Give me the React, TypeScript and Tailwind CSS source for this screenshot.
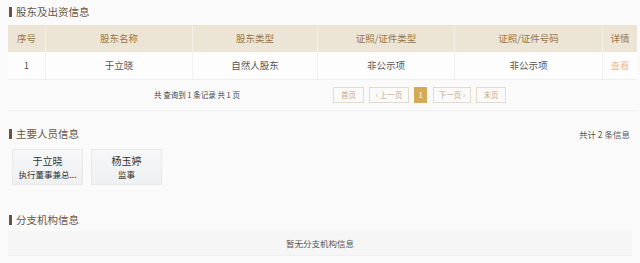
import React from "react";

const font = { fontFamily: '"Noto Sans CJK SC", "Noto Sans", sans-serif' };

function Title({ text }: { text: string }) {
  return (
    <div className="flex items-center gap-[4px] h-[14px] pl-[9px]">
      <div className="w-[3px] h-[10px] bg-[#6b5240]" />
      <span className="text-[10.5px] leading-none text-[#6b5544]">{text}</span>
    </div>
  );
}

export default function App() {
  const cols = [
    { label: "序号", w: "w-[38px]", v: "1" },
    { label: "股东名称", w: "w-[147px]", v: "于立晓" },
    { label: "股东类型", w: "w-[125px]", v: "自然人股东" },
    { label: "证照/证件类型", w: "w-[137px]", v: "非公示项" },
    { label: "证照/证件号码", w: "w-[148px]", v: "非公示项" },
    { label: "详情", w: "flex-1", v: "查看" },
  ];
  return (
    <div style={font} className="w-[640px] h-[263px] bg-[#fafafa] overflow-hidden pt-[5px]">
      <Title text="股东及出资信息" />
      <div className="ml-[8px] mr-[3px] mt-[6px]">
        <div className="flex h-[27px] bg-[#ece4d5]">
          {cols.map((c, i) => (
            <div
              key={i}
              className={`${c.w} flex items-center justify-center text-[9.5px] text-[#9a7544] ${i < cols.length - 1 ? "border-r border-[#f6f1e8]" : ""}`}
            >
              {c.label}
            </div>
          ))}
        </div>
        <div className="flex h-[28px] bg-[#fdfdfd] border-b border-[#eeeeee]">
          {cols.map((c, i) => (
            <div
              key={i}
              className={`${c.w} flex items-center justify-center text-[9.5px] ${i === cols.length - 1 ? "text-[#eeb996]" : "text-[#555555]"} ${i < cols.length - 1 ? "border-r border-[#f1f1f1]" : ""}`}
            >
              {c.v}
            </div>
          ))}
        </div>
        <div className="flex items-center h-[31px] border-b border-[#f0f0f0]">
          <div className="w-[325px] pl-[146px] text-[7.5px] text-[#444444]">共 查询到 1 条记录 共 1 页</div>
          <div className="flex items-center gap-[5px] text-[7.5px] text-[#c7ab82]">
            <div className="w-[31px] h-[16px] border border-[#e6dbc7] flex items-center justify-center">首页</div>
            <div className="w-[40px] h-[16px] border border-[#e6dbc7] flex items-center justify-center">‹ 上一页</div>
            <div className="w-[13px] h-[16px] bg-[#d6a955] text-white flex items-center justify-center">1</div>
            <div className="w-[38px] h-[16px] border border-[#e6dbc7] flex items-center justify-center ml-[1px]">下一页 ›</div>
            <div className="w-[30px] h-[16px] border border-[#e6dbc7] flex items-center justify-center">末页</div>
          </div>
        </div>
      </div>

      <div className="flex items-center justify-between mt-[16px] pr-[10px]">
        <Title text="主要人员信息" />
        <span className="text-[8.5px] text-[#555555]">共计 2 条信息</span>
      </div>
      <div className="flex gap-[8px] pl-[12px] mt-[8px]">
        {[
          { n: "于立晓", r: "执行董事兼总..." },
          { n: "杨玉婷", r: "监事" },
        ].map((p, i) => (
          <div
            key={i}
            className="w-[71px] h-[36px] border border-[#e9e9e9] bg-gradient-to-b from-[#f7f7f8] to-[#eef0f2] flex flex-col items-center justify-center gap-[1px]"
          >
            <span className="text-[10px] leading-[13px] text-[#333333]">{p.n}</span>
            <span className="text-[8.5px] leading-[12px] text-[#333333]">{p.r}</span>
          </div>
        ))}
      </div>

      <div className="mt-[28px]">
        <Title text="分支机构信息" />
      </div>
      <div className="ml-[8px] mr-[8px] mt-[4px] h-[25px] bg-[#f6f6f6] border-b border-[#eeeeee] flex items-center justify-center text-[8.5px] text-[#555555]">
        暂无分支机构信息
      </div>
    </div>
  );
}
